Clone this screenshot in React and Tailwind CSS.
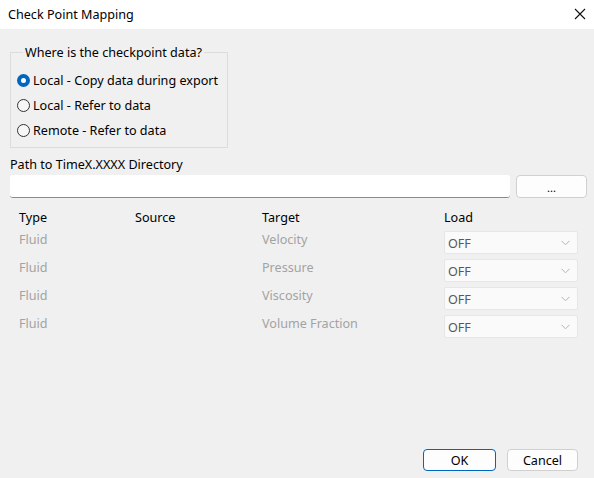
import React from "react";

const font = { fontFamily: '"Noto Sans", "Open Sans", sans-serif' };

function Radio({ checked, label }) {
  return (
    <div className="flex items-center h-[25px]">
      {checked ? (
        <span className="w-[13px] h-[13px] rounded-full bg-[#0067c0] flex items-center justify-center">
          <span className="w-[5px] h-[5px] rounded-full bg-white" />
        </span>
      ) : (
        <span className="w-[13px] h-[13px] rounded-full border border-[#333333] bg-[#f7f7f7]" />
      )}
      <span className="ml-[3px] text-[12.6px] leading-[17px] text-black">{label}</span>
    </div>
  );
}

function Chevron() {
  return (
    <svg width="9" height="6" viewBox="0 0 9 6" className="shrink-0">
      <path d="M0.5 0.8 L4.5 4.8 L8.5 0.8" fill="none" stroke="#b4b4b4" strokeWidth="1" />
    </svg>
  );
}

function Row({ type, target }) {
  return (
    <div className="grid grid-cols-[116px_127px_182px_134px] h-[28px] items-start">
      <span className="text-[12.6px] leading-[17px] text-[#a3a3a3]">{type}</span>
      <span />
      <span className="text-[12.6px] leading-[17px] text-[#a3a3a3]">{target}</span>
      <div className="h-[23px] bg-[#fafafa] border border-[#e6e6e6] rounded-[2px] flex items-center justify-between pl-[3px] pr-[7px]">
        <span className="text-[12.6px] leading-[17px] text-[#595959] mt-[2px]">OFF</span>
        <Chevron />
      </div>
    </div>
  );
}

export default function App() {
  return (
    <div className="w-[594px] h-[478px] bg-[#f0f0f0] flex flex-col overflow-hidden" style={font}>
      <div className="h-[29px] bg-white flex items-center justify-between pl-[8px] pr-[4px] shrink-0">
        <span className="text-[12.6px] leading-[17px] text-black">Check Point Mapping</span>
        <svg width="12" height="12" viewBox="0 0 12 12" className="mr-[4px] mb-[2px]">
          <path d="M1 1 L11 11 M11 1 L1 11" stroke="#111" strokeWidth="1.1" />
        </svg>
      </div>
      <div className="flex-1 flex flex-col pl-[10px] pr-[7px]">
        <fieldset className="mt-[15px] w-[218px] h-[104px] border border-[#dcdcdc] pl-[6px] pt-[7px]">
          <legend className="ml-[6px] px-[2px] text-[12.6px] leading-[17px] text-black">Where is the checkpoint data?</legend>
          <Radio checked label="Local - Copy data during export" />
          <Radio label="Local - Refer to data" />
          <Radio label="Remote - Refer to data" />
        </fieldset>
        <div className="mt-[8px] text-[12.6px] leading-[17px] text-black">Path to TimeX.XXXX Directory</div>
        <div className="mt-[2px] flex items-center gap-[6px]">
          <div className="w-[500px] h-[23px] bg-white border-b border-[#8a8a8a] rounded-[3px] shrink-0" />
          <div className="w-[71px] h-[23px] bg-[#fdfdfd] border border-[#d0d0d0] rounded-[4px] flex items-center justify-center shrink-0">
            <span className="text-[11px] leading-[14px] text-black mt-[2px]">...</span>
          </div>
        </div>
        <div className="mt-[11px] pl-[9px]">
          <div className="grid grid-cols-[116px_127px_182px_134px] h-[22px] items-start">
            <span className="text-[12.6px] leading-[17px] text-black">Type</span>
            <span className="text-[12.6px] leading-[17px] text-black">Source</span>
            <span className="text-[12.6px] leading-[17px] text-black">Target</span>
            <span className="text-[12.6px] leading-[17px] text-black">Load</span>
          </div>
          <Row type="Fluid" target="Velocity" />
          <Row type="Fluid" target="Pressure" />
          <Row type="Fluid" target="Viscosity" />
          <Row type="Fluid" target="Volume Fraction" />
        </div>
        <div className="mt-auto mb-[7px] flex justify-end gap-[11px] pr-[9px]">
          <div className="w-[73px] h-[22px] bg-[#fdfdfd] border border-[#0067c0] rounded-[4px] flex items-center justify-center text-[12.6px] leading-[17px] text-black">OK</div>
          <div className="w-[71px] h-[22px] bg-[#fdfdfd] border border-[#d0d0d0] rounded-[4px] flex items-center justify-center text-[12.6px] leading-[17px] text-black">Cancel</div>
        </div>
      </div>
    </div>
  );
}
